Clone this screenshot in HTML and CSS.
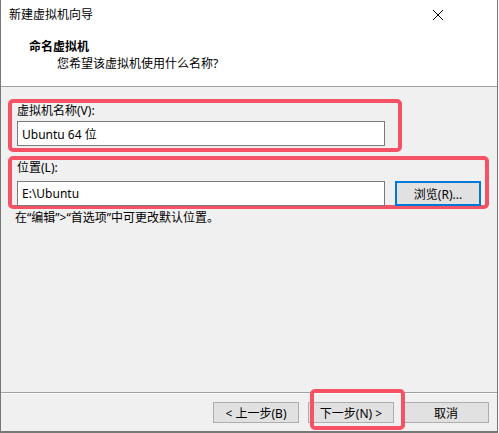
FILE: index.html
```html
<!DOCTYPE html>
<html lang="zh-CN">
<head>
    <meta charset="UTF-8">
    <title>新建虚拟机向导</title>
    <link rel="stylesheet" href="styles.css">
</head>
<body>
    <div class="window">
        <!-- title bar -->
        <div class="titlebar">
            <span class="title">新建虚拟机向导</span>
            <svg class="close" width="12" height="12" viewBox="0 0 12 12">
                <path d="M1 1 L11 11 M11 1 L1 11" stroke="#000" stroke-width="1" fill="none"/>
            </svg>
        </div>

        <!-- wizard page header -->
        <div class="header">
            <div class="header-title">命名虚拟机</div>
            <div class="header-sub">您希望该虚拟机使用什么名称?</div>
        </div>

        <!-- page body -->
        <div class="content">
            <div class="group group-name">
                <label for="vmName">虚拟机名称(V):</label>
                <input type="text" id="vmName" value="Ubuntu 64 位">
            </div>

            <div class="group group-path">
                <label for="vmPath">位置(L):</label>
                <div class="path-row">
                    <input type="text" id="vmPath" value="E:\Ubuntu">
                    <button class="btn btn-focus">浏览(R)...</button>
                </div>
            </div>

            <p class="hint">在“编辑”&gt;“首选项”中可更改默认位置。</p>
        </div>

        <!-- buttons -->
        <div class="footer">
            <button class="btn">&lt; 上一步(B)</button>
            <button class="btn">下一步(N) &gt;</button>
            <button class="btn">取消</button>
            <div class="mark"></div>
        </div>
    </div>
</body>
</html>
```

FILE: styles.css
```css
body {
    margin: 0;
    background-color: #fff;
    font-family: "Noto Sans", "Noto Sans CJK SC", sans-serif;
    font-size: 12px;
    color: #000;
}

.window {
    width: 498px;
    height: 433px;
    box-sizing: border-box;
    border-left: 1px solid #777;
    border-right: 1px solid #777;
    border-bottom: 2px solid #777;
    display: flex;
    flex-direction: column;
    background-color: #f0f0f0;
}

/* title bar */
.titlebar {
    height: 30px;
    background-color: #fff;
    display: flex;
    align-items: center;
    justify-content: space-between;
    padding: 0 53px 0 8px;
}

.titlebar .title {
    line-height: 16px;
}

/* header */
.header {
    height: 57px;
    background-color: #fff;
    border-bottom: 1px solid #a0a0a0;
    box-sizing: border-box;
    padding: 9px 0 0 28px;
}

.header-title {
    font-weight: bold;
    line-height: 16px;
}

.header-sub {
    margin-top: 1px;
    padding-left: 28px;
    line-height: 16px;
}

/* body */
.content {
    flex: 1;
    padding: 12px 0 0 7px;
}

.group {
    border: 4px solid #f55266;
    border-radius: 5px;
    box-sizing: border-box;
    padding: 0 0 2px 5px;
}

.group label {
    display: block;
    height: 18px;
    line-height: 16px;
}

.group input {
    height: 25px;
    width: 368px;
    box-sizing: border-box;
    border: 1px solid #7a7a7a;
    background-color: #fff;
    padding: 0 4px;
    font-family: inherit;
    font-size: 12px;
    margin: 0;
}

.group-name {
    width: 394px;
    height: 53px;
}

.group-path {
    margin-top: 4px;
    width: 481px;
    height: 53px;
}

.group-path label {
    height: 21px;
}

.path-row {
    display: flex;
    gap: 10px;
}

.btn {
    width: 86px;
    height: 21px;
    box-sizing: border-box;
    border: 1px solid #adadad;
    background-color: #e1e1e1;
    font-family: inherit;
    font-size: 12px;
    padding: 0;
    margin: 0;
    color: #000;
}

.path-row .btn {
    height: 25px;
}

.btn-focus {
    border: 2px solid #0078d7;
}

.hint {
    margin: 1px 0 0 7px;
    line-height: 16px;
}

/* footer */
.footer {
    position: relative;
    height: 39px;
    box-sizing: border-box;
    border-top: 1px solid #a0a0a0;
    box-shadow: inset 0 1px 0 #fff;
    display: flex;
    justify-content: flex-end;
    gap: 9px;
    padding: 9px 8px 0 0;
}

/* highlight drawn over the next button */
.mark {
    position: absolute;
    left: 309px;
    top: -4px;
    width: 95px;
    height: 41px;
    box-sizing: border-box;
    border: 4px solid #f55266;
    border-radius: 5px;
}
```
